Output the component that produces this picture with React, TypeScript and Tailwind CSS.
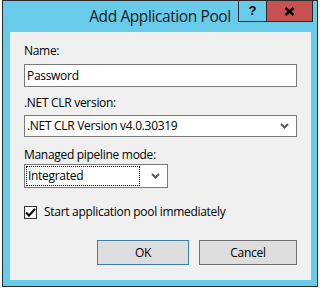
const font = "font-['Segoe_UI','Open_Sans','Noto_Sans',sans-serif]";

function Chevron() {
  return (
    <svg width="9" height="6" viewBox="0 0 9 6" className="shrink-0">
      <path d="M1 1 L4.5 4.5 L8 1" fill="none" stroke="#5a5a5a" strokeWidth="2" />
    </svg>
  );
}

export default function App() {
  return (
    <div className={`w-[320px] h-[289px] bg-white ${font}`}>
      <div className="ml-[2px] w-[316px] h-[287px] border border-[#2b2b2b] bg-[#69cbea] flex flex-col">
        {/* title bar */}
        <div className="h-[31px] grid grid-cols-[1fr_auto_1fr]">
          <div />
          <div className="pt-[5px] text-[15.5px] leading-[20px] tracking-[-0.4px] text-[#1b1b1b]">Add Application Pool</div>
          <div className="flex justify-end items-start pr-[4px]">
            <div className="w-[28px] h-[21px] border-l border-b border-[#2b2b2b] flex items-center justify-center text-[13px] font-bold text-black font-['Liberation_Sans',sans-serif]">
              ?
            </div>
            <div className="w-[47px] h-[21px] border-x border-b border-[#2b2b2b] bg-[#c75050] flex items-center justify-center">
              <svg width="11" height="9" viewBox="0 0 11 9">
                <path d="M1.5 1 L9.5 8 M9.5 1 L1.5 8" stroke="#000" strokeWidth="2.4" />
              </svg>
            </div>
          </div>
        </div>
        {/* body */}
        <div className="ml-[7px] mr-[6px] mb-[6px] flex-1 bg-[#f0f0f0] px-[14px] pt-[11px] text-[12px] leading-[16px] tracking-[-0.3px] text-black">
          <div>Name:</div>
          <div className="mt-[5px] h-[23px] border border-[#7a7a7a] bg-white px-[2px] flex items-center">Password</div>
          <div className="mt-[8px]">.NET CLR version:</div>
          <div className="mt-[4px] h-[22px] border border-[#7a7a7a] bg-white pl-[2px] pr-[7px] flex items-center justify-between">
            <span>.NET CLR Version v4.0.30319</span>
            <Chevron />
          </div>
          <div className="mt-[10px]">Managed pipeline mode:</div>
          <div className="mt-[1px] w-[144px] h-[24px] border border-[#7a7a7a] bg-white p-[1px] pr-[7px] flex items-center gap-[11px]">
            <div className="flex-1 h-full border border-dotted border-black px-[1px] flex items-center">Integrated</div>
            <Chevron />
          </div>
          <div className="mt-[16px] flex items-center gap-[7px]">
            <div className="w-[13px] h-[13px] border border-[#333] bg-white flex items-center justify-center">
              <svg width="11" height="9" viewBox="0 0 11 9">
                <path d="M1 4.5 L4 7.5 L10 1" fill="none" stroke="#111" strokeWidth="2.2" />
              </svg>
            </div>
            <span>Start application pool immediately</span>
          </div>
          <div className="mt-[20px] flex justify-end gap-[10px]">
            <div className="w-[92px] h-[25px] border border-[#3c7fb1] bg-[#dddddd] flex items-center justify-center">OK</div>
            <div className="w-[98px] h-[25px] border border-[#707070] bg-[#dddddd] flex items-center justify-center">Cancel</div>
          </div>
        </div>
      </div>
    </div>
  );
}
